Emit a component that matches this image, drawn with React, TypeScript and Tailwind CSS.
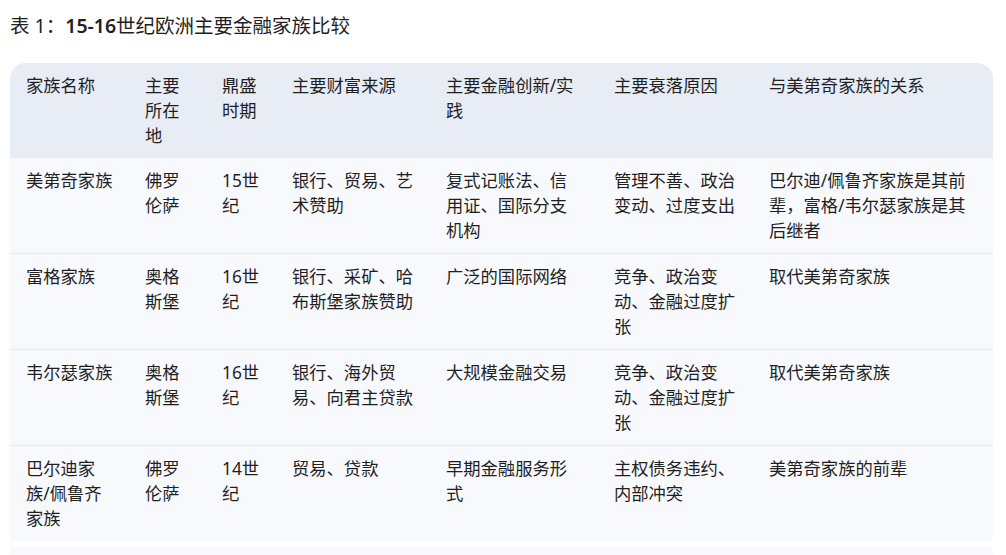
import React from 'react'

type Row = [string, string, string, string, string, string, string]

const HEAD: Row = ['家族名称', '主要所在地', '鼎盛时期', '主要财富来源', '主要金融创新/实践', '主要衰落原因', '与美第奇家族的关系']

const ROWS: Row[] = [
  ['美第奇家族', '佛罗伦萨', '15世纪', '银行、贸易、艺术赞助', '复式记账法、信用证、国际分支机构', '管理不善、政治变动、过度支出', '巴尔迪/佩鲁齐家族是其前辈，富格/韦尔瑟家族是其后继者'],
  ['富格家族', '奥格斯堡', '16世纪', '银行、采矿、哈布斯堡家族赞助', '广泛的国际网络', '竞争、政治变动、金融过度扩张', '取代美第奇家族'],
  ['韦尔瑟家族', '奥格斯堡', '16世纪', '银行、海外贸易、向君主贷款', '大规模金融交易', '竞争、政治变动、金融过度扩张', '取代美第奇家族'],
  ['巴尔迪家族/佩鲁齐家族', '佛罗伦萨', '14世纪', '贸易、贷款', '早期金融服务形式', '主权债务违约、内部冲突', '美第奇家族的前辈'],
]

// column widths measured off the screenshot
const WIDTHS = ['w-[119px]', 'w-[77px]', 'w-[70px]', 'w-[154px]', 'w-[168px]', 'w-[155px]', 'w-[240px]']

const CELL = 'pl-[16px] pr-[15px] py-[10px] align-top text-left font-normal'

export default function App() {
  return (
    <div
      className="min-h-screen bg-white text-[#1f1f1f] px-[10px] pt-[12px]"
      style={{ fontFamily: '"Noto Sans", "Noto Sans CJK SC", sans-serif' }}
    >
      <h3 className="text-[19.5px] leading-[28px] font-normal mb-[23px]">
        表 1：<span className="font-semibold">15-16</span>世纪欧洲主要金融家族比较
      </h3>

      <div className="w-[983px] rounded-t-[16px] rounded-b-[4px] overflow-hidden bg-[#f8f9fd]">
        <table className="w-full table-fixed border-collapse text-[17.3px] leading-[25px]">
          <colgroup>
            {WIDTHS.map((w, i) => (
              <col key={i} className={w} />
            ))}
          </colgroup>
          <thead>
            <tr className="bg-[#e8ecf5]">
              {HEAD.map((h, i) => (
                <th key={i} className={CELL}>
                  {h}
                </th>
              ))}
            </tr>
          </thead>
          <tbody>
            {ROWS.map((r, ri) => (
              <tr key={ri} className={ri > 0 ? 'border-t border-[#e6e9f0]' : ''}>
                {r.map((c, ci) => (
                  <td key={ci} className={CELL}>
                    {c}
                  </td>
                ))}
              </tr>
            ))}
          </tbody>
        </table>
      </div>

      {/* next block, cut off by the window */}
      <div className="w-[983px] h-[48px] mt-[6px] rounded-[4px] bg-[#f8f9fd]" />
    </div>
  )
}
